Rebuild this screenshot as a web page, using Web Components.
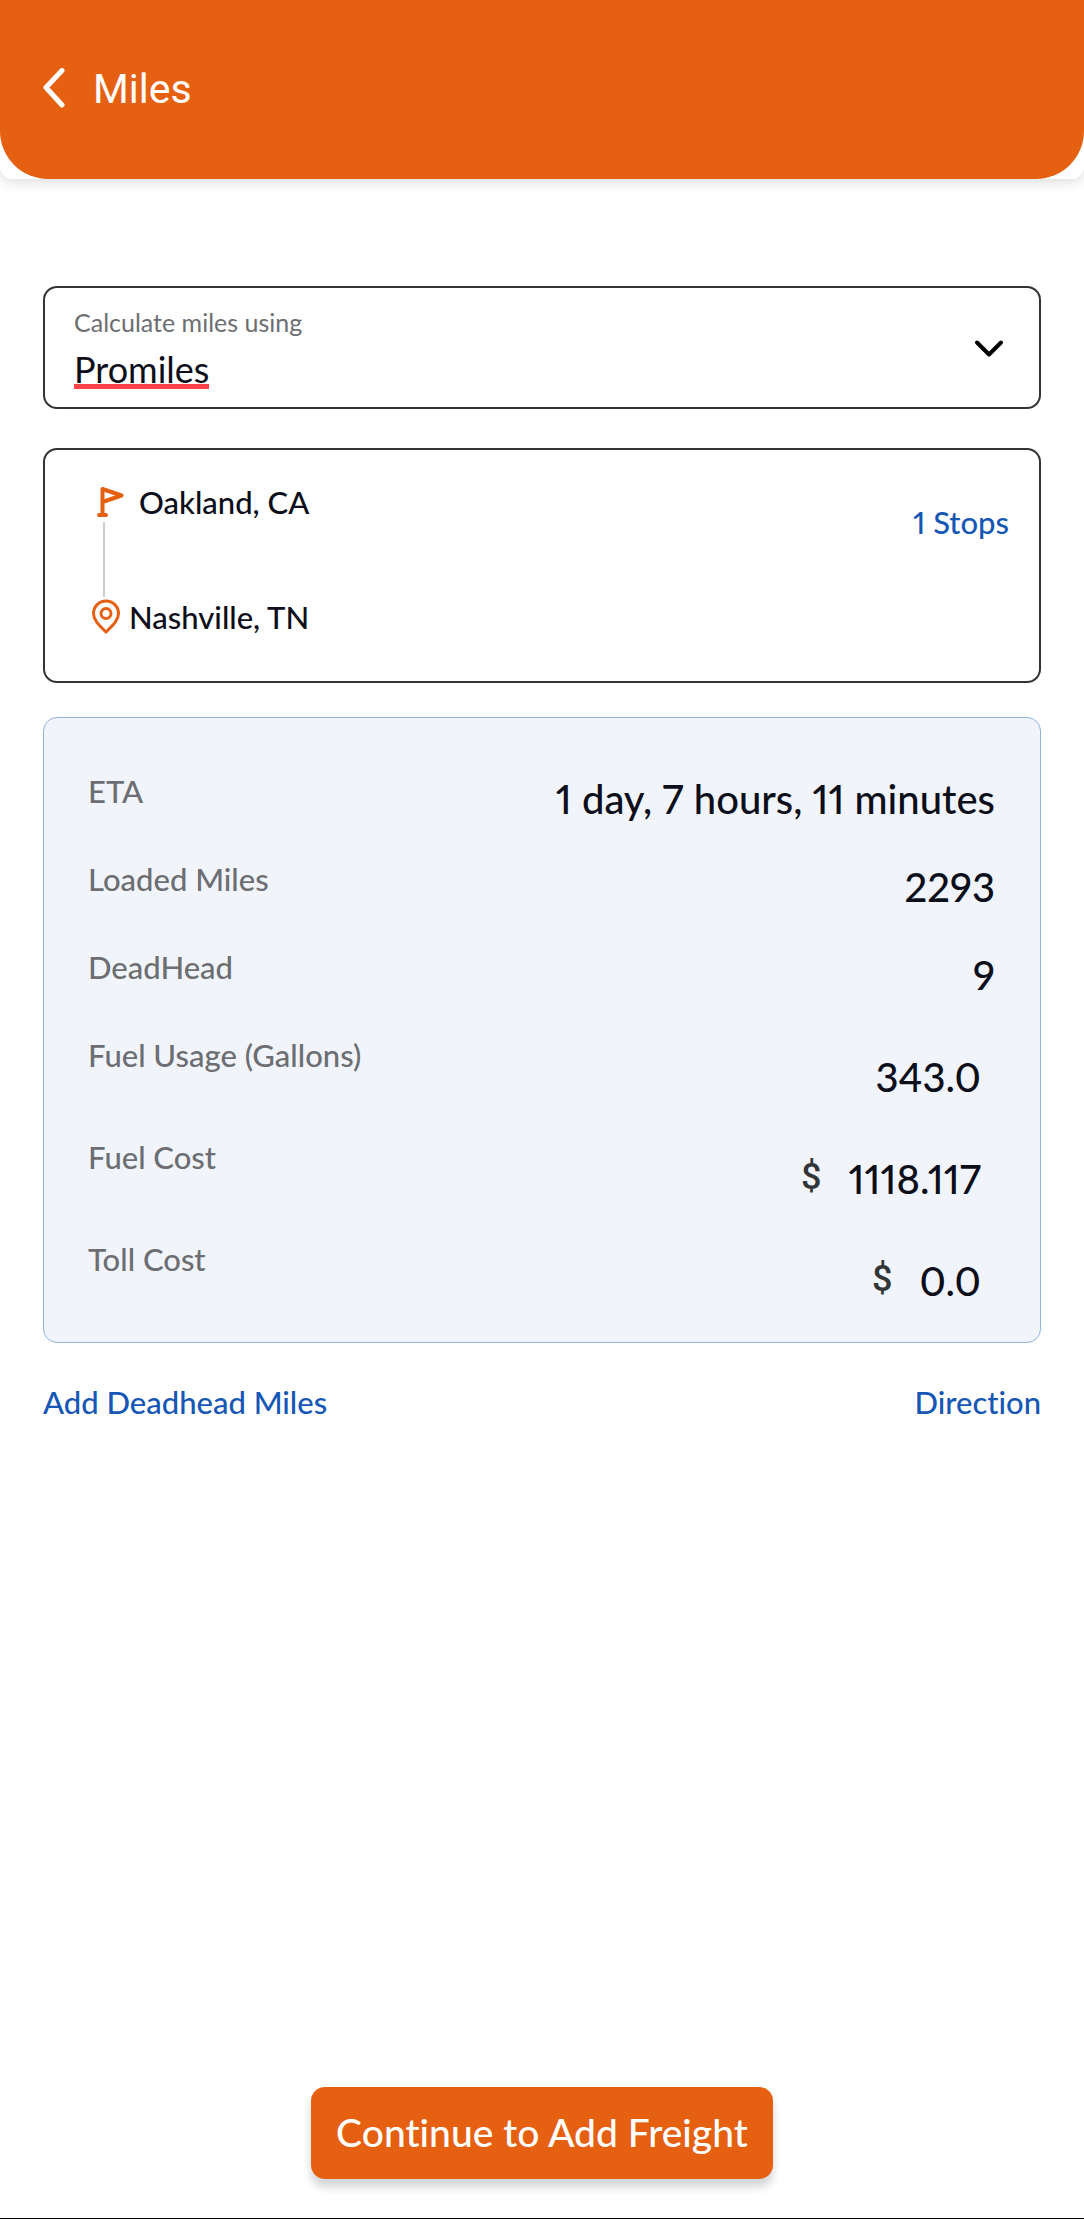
<!DOCTYPE html>
<html lang="en">
<head>
<meta charset="utf-8">
<meta name="viewport" content="width=device-width, initial-scale=1">
<title>Miles</title>
<style>
  :root {
    --orange: #e66012;
    --blue: #1656b5;
    --ink: #0c0e1a;
    --muted: #6c6e72;
    --outline: #333335;
  }
  body {
    margin: 0;
    background: #fff;
    color: var(--ink);
    font-family: Lato, "Liberation Sans", sans-serif;
    font-size: 31px;
    line-height: 40px;
    font-weight: 500;
    font-variant-numeric: proportional-nums;
    font-variant-ligatures: no-common-ligatures;
  }
</style>
</head>
<body>
<miles-page>
  <app-header slot="header">Miles</app-header>
  <method-select label="Calculate miles using" value="Promiles"></method-select>
  <route-card from="Oakland, CA" to="Nashville, TN" stops="1 Stops"></route-card>
  <trip-summary>
    <stat-row label="ETA">1 day, 7 hours, 11 minutes</stat-row>
    <stat-row label="Loaded Miles">2293</stat-row>
    <stat-row label="DeadHead">9</stat-row>
    <stat-field label="Fuel Usage (Gallons)" value="343.0"></stat-field>
    <stat-field label="Fuel Cost" unit="$" value="1118.117"></stat-field>
    <stat-field label="Toll Cost" unit="$" value="0.0"></stat-field>
  </trip-summary>
  <link-row>
    <text-link>Add Deadhead Miles</text-link>
    <text-link>Direction</text-link>
  </link-row>
  <primary-button slot="footer">Continue to Add Freight</primary-button>
</miles-page>

<script>
  class Base extends HTMLElement {
    connectedCallback() {
      if (this.shadowRoot) return;
      this.attachShadow({ mode: 'open' }).innerHTML =
        '<style>*{box-sizing:border-box}' + this.styles() + '</style>' + this.markup();
    }
    attr(name) { return this.getAttribute(name) || ''; }
  }

  customElements.define('miles-page', class extends Base {
    styles() { return `
      :host { display: flex; flex-direction: column; min-height: 100vh; box-sizing: border-box; border-bottom: 1px solid #000; }
      main { flex: 1; padding: 107px 43px 40px; }
      footer { display: flex; justify-content: center; padding-bottom: 39px; }`; }
    markup() { return `<slot name="header"></slot><main><slot></slot></main><footer><slot name="footer"></slot></footer>`; }
  });

  customElements.define('app-header', class extends Base {
    styles() { return `
      :host { display: block; background: #fff; border-radius: 0 0 12px 12px; box-shadow: 0 2px 14px rgba(0,0,0,.16); }
      header { display: flex; align-items: center; gap: 27px; padding: 64px 42px; background: var(--orange); border-radius: 0 0 48px 48px; color: #fff; }
      button { display: flex; padding: 0; border: 0; background: none; color: inherit; }
      svg { display: block; }
      h1 { margin: 0; font: 400 41px/51px Roboto, sans-serif; }`; }
    markup() { return `
      <header>
        <button type="button" aria-label="Back">
          <svg width="24" height="44" viewBox="0 0 24 44" fill="none" stroke="currentColor" stroke-width="5" stroke-linecap="round" stroke-linejoin="round"><path d="M20 2.500 4 19.500l16 17.500"/></svg>
        </button>
        <h1><slot></slot></h1>
      </header>`; }
  });

  customElements.define('method-select', class extends Base {
    styles() { return `
      :host { display: flex; align-items: center; justify-content: space-between; box-sizing: border-box; padding: 18px 34px 18px 29px; border: 2px solid var(--outline); border-radius: 14px; }
      .field { display: flex; flex-direction: column; align-items: flex-start; gap: 11px; }
      label { font-size: 25px; line-height: 32px; font-weight: 400; color: var(--muted); }
      select { appearance: none; field-sizing: content; height: 40px; margin: 0; padding: 0; border: 0; border-radius: 0; color: inherit; font: 400 36px/40px Lato, "Liberation Sans", sans-serif; background: linear-gradient(#fa4248, #fa4248) left bottom / 100% 5px no-repeat; }
      svg { display: block; }`; }
    markup() { return `
      <div class="field">
        <label for="method">${this.attr('label')}</label>
        <select id="method"><option>${this.attr('value')}</option></select>
      </div>
      <svg width="32" height="20" viewBox="0 0 32 20" fill="none" stroke="#000" stroke-width="4" stroke-linecap="round" stroke-linejoin="round"><path d="M4 4.500l12 12 12-12"/></svg>`; }
  });

  customElements.define('route-card', class extends Base {
    styles() { return `
      :host { display: flex; justify-content: space-between; align-items: flex-start; box-sizing: border-box; margin-top: 39px; padding: 32px 30px 44px 47px; border: 2px solid var(--outline); border-radius: 14px; }
      ol { margin: 0; padding: 0; list-style: none; }
      li { display: flex; align-items: center; gap: 9px; }
      li:first-child { gap: 14px; padding-left: 4px; }
      .track { display: block; width: 2px; height: 75px; margin-left: 11px; background: #ccc; }
      svg { display: block; }
      a { margin-top: 20px; color: var(--blue); text-decoration: none; }`; }
    markup() { return `
      <ol>
        <li>
          <svg width="29" height="32" viewBox="0 0 29 32" fill="none" stroke="var(--orange)" stroke-width="4" stroke-linecap="round" stroke-linejoin="round"><path d="M3 29h7M6.500 29V3l19 6.500-19 6.500"/></svg>
          <span>${this.attr('from')}</span>
        </li>
        <li class="track" aria-hidden="true"></li>
        <li>
          <svg width="28" height="36" viewBox="0 0 28 36" fill="none" stroke="var(--orange)" stroke-width="3"><path d="M14 33C8 27 1.500 21.500 1.500 14.500a12.500 12.500 0 0 1 25 0C26.500 21.500 20 27 14 33z"/><circle cx="14" cy="14.500" r="5"/></svg>
          <span>${this.attr('to')}</span>
        </li>
      </ol>
      <a href="#stops">${this.attr('stops')}</a>`; }
  });

  customElements.define('trip-summary', class extends Base {
    styles() { return `
      :host { display: flex; flex-direction: column; gap: 36px; box-sizing: border-box; margin-top: 34px; padding: 53px 45px 37px 44px; background: #f1f5fb; border: 1px solid #8fb3de; border-radius: 14px; }`; }
    markup() { return `<slot></slot>`; }
  });

  customElements.define('stat-row', class extends Base {
    styles() { return `
      :host { display: flex; justify-content: space-between; align-items: flex-start; }
      .label { color: var(--muted); }
      .value { margin-top: 4px; font-size: 40px; line-height: 48px; }`; }
    markup() { return `<span class="label">${this.attr('label')}</span><span class="value"><slot></slot></span>`; }
  });

  customElements.define('stat-field', class extends Base {
    styles() { return `
      :host { display: flex; justify-content: space-between; align-items: flex-start; }
      label { color: var(--muted); }
      .box { display: flex; align-items: center; gap: 27px; margin-top: 18px; padding-right: 14px; }
      .unit { color: #333639; font: 500 36px/44px Roboto, sans-serif; padding-bottom: 4px; }
      input { field-sizing: content; height: 48px; padding: 0; border: 0; background: none; color: inherit; font: inherit; font-variant-numeric: inherit; font-size: 40px; line-height: 48px; text-align: right; }`; }
    markup() {
      const unit = this.attr('unit');
      return `<label for="value">${this.attr('label')}</label>
        <div class="box">${unit ? `<span class="unit">${unit}</span>` : ''}<input id="value" type="text" inputmode="decimal" value="${this.attr('value')}"></div>`;
    }
  });

  customElements.define('link-row', class extends Base {
    styles() { return `:host { display: flex; justify-content: space-between; margin-top: 39px; }`; }
    markup() { return `<slot></slot>`; }
  });

  customElements.define('text-link', class extends Base {
    styles() { return `:host { display: block; } a { color: var(--blue); text-decoration: none; }`; }
    markup() { return `<a href="#"><slot></slot></a>`; }
  });

  customElements.define('primary-button', class extends Base {
    styles() { return `
      :host { display: block; }
      button { display: block; padding: 21px 25px 23px; border: 0; border-radius: 14px; background: var(--orange); color: #fff; font: inherit; font-variant-ligatures: inherit; font-size: 39px; line-height: 48px; box-shadow: 0 8px 8px rgba(40,45,60,.2); }`; }
    markup() { return `<button type="button"><slot></slot></button>`; }
  });
</script>
</body>
</html>
